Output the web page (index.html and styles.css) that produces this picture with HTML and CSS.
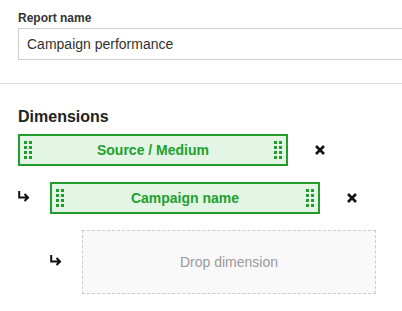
FILE: index.html
```html
<!DOCTYPE html>
<html lang="en">
<head>
    <meta charset="UTF-8">
    <meta name="viewport" content="width=device-width, initial-scale=1.0">
    <title>Report builder</title>
    <link rel="stylesheet" href="styles.css">
</head>
<body>

    <!-- Report name -->
    <div class="report-section">
        <label class="field-label" for="reportName">Report name</label>
        <input type="text" id="reportName" class="text-field" value="Campaign performance" />
    </div>

    <!-- Dimensions -->
    <div class="dimensions-section">
        <h3 class="section-title">Dimensions</h3>

        <div class="dimension-row">
            <div class="dimension-chip">
                <svg class="grip" width="8" height="18" viewBox="0 0 8 18"><g fill="#1f9e2b"><rect x="0" y="0" width="3" height="3"/><rect x="5" y="0" width="3" height="3"/><rect x="0" y="5" width="3" height="3"/><rect x="5" y="5" width="3" height="3"/><rect x="0" y="10" width="3" height="3"/><rect x="5" y="10" width="3" height="3"/><rect x="0" y="15" width="3" height="3"/><rect x="5" y="15" width="3" height="3"/></g></svg>
                <span class="chip-label">Source / Medium</span>
                <svg class="grip" width="8" height="18" viewBox="0 0 8 18"><g fill="#1f9e2b"><rect x="0" y="0" width="3" height="3"/><rect x="5" y="0" width="3" height="3"/><rect x="0" y="5" width="3" height="3"/><rect x="5" y="5" width="3" height="3"/><rect x="0" y="10" width="3" height="3"/><rect x="5" y="10" width="3" height="3"/><rect x="0" y="15" width="3" height="3"/><rect x="5" y="15" width="3" height="3"/></g></svg>
            </div>
            <span class="remove-btn">
                <svg width="10" height="10" viewBox="0 0 10 10"><path d="M1 1 L9 9 M9 1 L1 9" stroke="#111" stroke-width="2.6"/></svg>
            </span>
        </div>

        <div class="dimension-row">
            <span class="child-arrow">
                <svg width="11" height="11" viewBox="0 0 11 11"><path d="M1.2 0 V6.5 H10 M6.5 3 L10 6.5 L6.5 10" fill="none" stroke="#111" stroke-width="2"/></svg>
            </span>
            <div class="dimension-chip">
                <svg class="grip" width="8" height="18" viewBox="0 0 8 18"><g fill="#1f9e2b"><rect x="0" y="0" width="3" height="3"/><rect x="5" y="0" width="3" height="3"/><rect x="0" y="5" width="3" height="3"/><rect x="5" y="5" width="3" height="3"/><rect x="0" y="10" width="3" height="3"/><rect x="5" y="10" width="3" height="3"/><rect x="0" y="15" width="3" height="3"/><rect x="5" y="15" width="3" height="3"/></g></svg>
                <span class="chip-label">Campaign name</span>
                <svg class="grip" width="8" height="18" viewBox="0 0 8 18"><g fill="#1f9e2b"><rect x="0" y="0" width="3" height="3"/><rect x="5" y="0" width="3" height="3"/><rect x="0" y="5" width="3" height="3"/><rect x="5" y="5" width="3" height="3"/><rect x="0" y="10" width="3" height="3"/><rect x="5" y="10" width="3" height="3"/><rect x="0" y="15" width="3" height="3"/><rect x="5" y="15" width="3" height="3"/></g></svg>
            </div>
            <span class="remove-btn">
                <svg width="10" height="10" viewBox="0 0 10 10"><path d="M1 1 L9 9 M9 1 L1 9" stroke="#111" stroke-width="2.6"/></svg>
            </span>
        </div>

        <div class="dimension-row nested">
            <span class="child-arrow">
                <svg width="11" height="11" viewBox="0 0 11 11"><path d="M1.2 0 V6.5 H10 M6.5 3 L10 6.5 L6.5 10" fill="none" stroke="#111" stroke-width="2"/></svg>
            </span>
            <div class="drop-zone">Drop dimension</div>
        </div>
    </div>

</body>
</html>
```

FILE: styles.css
```css
body {
    margin: 0;
    font-family: "Liberation Sans", Arial, sans-serif;
    background-color: white;
    color: #222;
    overflow: hidden;
}

/* Report name */
.report-section {
    padding: 11px 0 23px 18px;
    border-bottom: 1px solid #e0e0e0;
}

.field-label {
    display: block;
    font-size: 12px;
    font-weight: bold;
    line-height: 14px;
    color: #333;
    margin-bottom: 3px;
}

.text-field {
    display: block;
    box-sizing: border-box;
    width: 400px;
    height: 32px;
    padding: 0 8px;
    border: 1px solid #d0d0d0;
    font-family: "Liberation Sans", Arial, sans-serif;
    font-size: 14px;
    color: #333;
    outline: none;
}

/* Dimensions */
.dimensions-section {
    padding: 23px 18px 0 18px;
}

.section-title {
    margin: 0 0 7px 0;
    font-size: 16px;
    line-height: 20px;
    font-weight: bold;
    color: #222;
}

.dimension-row {
    display: flex;
    align-items: center;
    margin-bottom: 16px;
}

.dimension-row.nested {
    margin-left: 32px;
}

.child-arrow {
    width: 32px;
    display: flex;
    margin-bottom: 3px;
}

.dimension-chip {
    box-sizing: border-box;
    width: 270px;
    height: 32px;
    display: flex;
    align-items: center;
    justify-content: space-between;
    padding: 0 4px;
    border: 2px solid #1f9e2b;
    background-color: #e3f5e4;
}

.chip-label {
    font-size: 14px;
    font-weight: bold;
    color: #22a02d;
}

.remove-btn {
    display: flex;
    margin-left: 27px;
    cursor: pointer;
}

.drop-zone {
    box-sizing: border-box;
    width: 294px;
    height: 64px;
    display: flex;
    align-items: center;
    justify-content: center;
    border: 1px dashed #cccccc;
    background-color: #f9f9f9;
    font-size: 14px;
    color: #999;
}
```
